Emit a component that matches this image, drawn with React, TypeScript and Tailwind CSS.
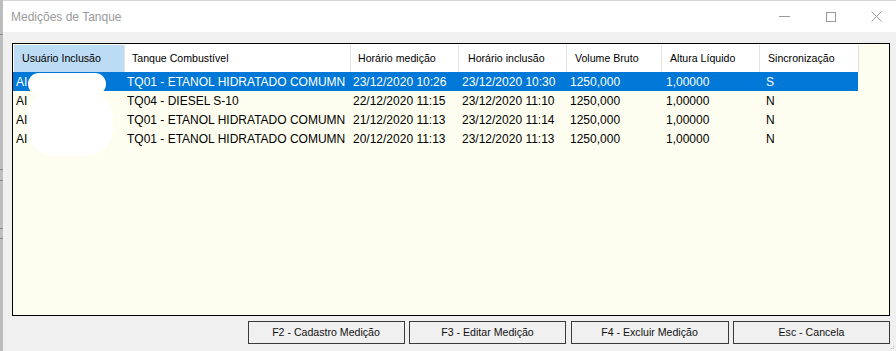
import React from 'react';

type Medicao = {
  usuario: string;
  tanque: string;
  horarioMedicao: string;
  horarioInclusao: string;
  volume: string;
  altura: string;
  sinc: string;
};

const ROWS: Medicao[] = [
  { usuario: 'AI', tanque: 'TQ01 - ETANOL HIDRATADO COMUMN', horarioMedicao: '23/12/2020 10:26', horarioInclusao: '23/12/2020 10:30', volume: '1250,000', altura: '1,00000', sinc: 'S' },
  { usuario: 'AI', tanque: 'TQ04 - DIESEL S-10', horarioMedicao: '22/12/2020 11:15', horarioInclusao: '23/12/2020 11:10', volume: '1250,000', altura: '1,00000', sinc: 'N' },
  { usuario: 'AI', tanque: 'TQ01 - ETANOL HIDRATADO COMUMN', horarioMedicao: '21/12/2020 11:13', horarioInclusao: '23/12/2020 11:14', volume: '1250,000', altura: '1,00000', sinc: 'N' },
  { usuario: 'AI', tanque: 'TQ01 - ETANOL HIDRATADO COMUMN', horarioMedicao: '20/12/2020 11:13', horarioInclusao: '23/12/2020 11:13', volume: '1250,000', altura: '1,00000', sinc: 'N' },
];

// column widths (px) and text offsets, header vs. cells
const COLS = [
  { label: 'Usuário Inclusão', w: 'w-[111px]', hp: 'pl-[8px]', cp: 'pl-[3px]' },
  { label: 'Tanque Combustível', w: 'w-[226px]', hp: 'pl-[7px]', cp: 'pl-[3px]' },
  { label: 'Horário medição', w: 'w-[108px]', hp: 'pl-[7px]', cp: 'pl-[3px]' },
  { label: 'Horário inclusão', w: 'w-[108px]', hp: 'pl-[9px]', cp: 'pl-[4px]' },
  { label: 'Volume Bruto', w: 'w-[95px]', hp: 'pl-[8px]', cp: 'pl-[4px]' },
  { label: 'Altura Líquido', w: 'w-[98px]', hp: 'pl-[8px]', cp: 'pl-[5px]' },
  { label: 'Sincronização', w: 'w-[99px]', hp: 'pl-[8px]', cp: 'pl-[7px]' },
];

const BUTTONS = [
  { label: 'F2 - Cadastro Medição', w: 'w-[157px]' },
  { label: 'F3 - Editar Medição', w: 'w-[157px]' },
  { label: 'F4 - Excluir Medição', w: 'w-[158px]' },
  { label: 'Esc - Cancela', w: 'w-[157px]' },
];

export default function App() {
  return (
    <div className="w-[896px] h-[351px] bg-[#d4d4d4] flex overflow-hidden font-['Liberation_Sans',Arial,sans-serif]">
      {/* window behind, left edge */}
      <div className="w-[3px] flex flex-col bg-[#bdbdbd]">
        <div className="h-[34px]" />
        <div className="h-px bg-[#8a8a8a]" />
        <div className="h-[134px]" />
        <div className="h-px bg-[#8a8a8a]" />
        <div className="h-[10px]" />
        <div className="h-px bg-[#8a8a8a]" />
        <div className="h-[47px]" />
        <div className="h-px bg-[#8a8a8a]" />
        <div className="h-[9px]" />
        <div className="h-px bg-[#8a8a8a]" />
      </div>

      <div className="flex-1 flex flex-col pt-px">
        {/* title bar */}
        <div className="h-[31px] bg-white flex items-center">
          <span className="pl-2 text-[12px] text-[#9a9a9a]">Medições de Tanque</span>
          <div className="ml-auto flex items-center h-full">
            <div className="w-[11px] h-px bg-[#9a9a9a] mr-[36px]" />
            <div className="w-[10px] h-[10px] border border-[#9a9a9a] mr-[35px]" />
            <svg width="11" height="11" viewBox="0 0 11 11" className="mr-[14px]">
              <path d="M0.5 0.5L10.5 10.5M10.5 0.5L0.5 10.5" stroke="#9a9a9a" strokeWidth="1" />
            </svg>
          </div>
        </div>

        {/* body */}
        <div className="flex-1 bg-[#f0f0f0] flex flex-col pt-[11px] pl-[9px] pr-[6px] relative">
          <div className="h-[273px] border border-black bg-[#fefef0] relative overflow-hidden">
            {/* header */}
            <div className="flex h-[27px] mt-px text-[10.6px] text-black">
              {COLS.map((c, i) => (
                <div
                  key={c.label}
                  className={`${c.w} ${c.hp} flex items-center border-r border-[#e3e3e3] ${i === 0 ? 'bg-[#bcdcf4] ml-px w-[110px]' : 'bg-white'}`}
                >
                  {c.label}
                </div>
              ))}
            </div>

            {/* rows */}
            {ROWS.map((r, idx) => {
              const cells = [r.usuario, r.tanque, r.horarioMedicao, r.horarioInclusao, r.volume, r.altura, r.sinc];
              const sel = idx === 0;
              return (
                <div
                  key={idx}
                  className={`flex h-[19px] w-[845px] text-[12px] ${sel ? 'bg-[#0078d7] text-white' : 'text-black'}`}
                >
                  {cells.map((v, i) => (
                    <div key={i} className={`${COLS[i].w} ${COLS[i].cp} flex items-center whitespace-nowrap overflow-hidden`}>
                      {v}
                    </div>
                  ))}
                </div>
              );
            })}

            {/* name redaction blobs */}
            <div className="absolute left-[15px] top-[29px] w-[78px] h-[22px] rounded-[14px] bg-white" />
            <div className="absolute left-[14px] top-[46px] w-[86px] h-[66px] rounded-[28px] bg-white" />
          </div>

          {/* buttons */}
          <div className="flex justify-end gap-[4.5px] mt-[5px]">
            {BUTTONS.map(b => (
              <button
                key={b.label}
                className={`${b.w} h-[23px] border border-[#3a3a3a] bg-[#f0f0f0] text-[10.6px] text-[#111] font-['Liberation_Sans',Arial,sans-serif]`}
              >
                {b.label}
              </button>
            ))}
          </div>

          {/* size grip */}
          <div className="absolute right-[2px] bottom-[2px] grid grid-cols-3 gap-px">
            <span />
            <span />
            <span className="w-px h-px bg-[#bdbdbd]" />
            <span />
            <span className="w-px h-px bg-[#bdbdbd]" />
            <span className="w-px h-px bg-[#bdbdbd]" />
          </div>
        </div>
      </div>
    </div>
  );
}
